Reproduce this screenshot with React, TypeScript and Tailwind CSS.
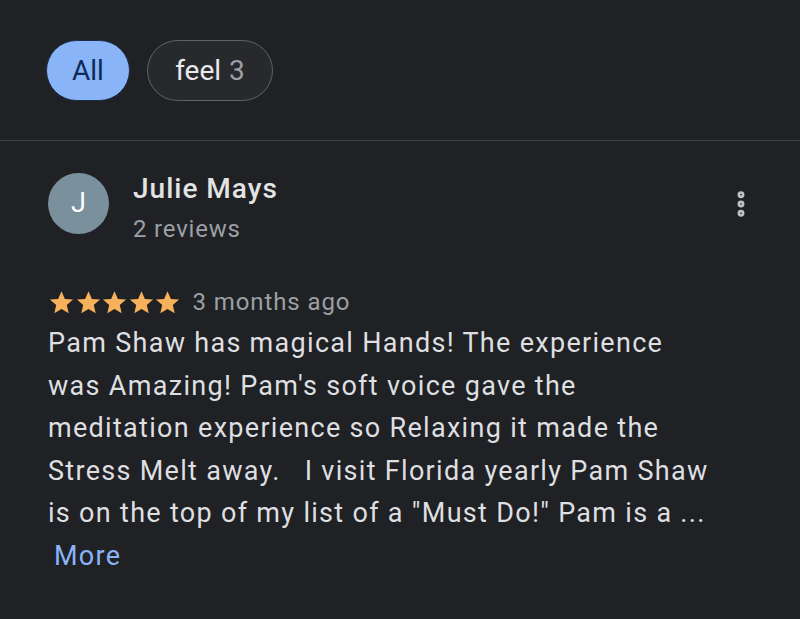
import { MoreVertical } from 'lucide-react';

function Star() {
  return (
    <svg className="w-[27px] h-[27px] -mr-[0.5px]" viewBox="0 0 24 24" fill="#f6b15a">
      <path d="M12 2l3 6.8 7.3.6-5.6 4.8 1.7 7.3L12 17.7l-6.4 3.8 1.7-7.3-5.6-4.8 7.3-.6z" />
    </svg>
  );
}

export default function App() {
  return (
    <div
      className="w-[800px] h-[619px] overflow-hidden bg-[#202124] text-[#e8eaed]"
      style={{ fontFamily: 'Roboto, "Noto Sans", sans-serif' }}
    >
      {/* Filter chips */}
      <div className="flex items-center gap-[17px] pl-[46px] pt-[40px] pb-[39px] border-b border-[#3c4043]">
        <button className="h-[61px] w-[84px] rounded-full bg-[#8ab4f8] text-[#0e2a59] text-[28px] border border-[#1a2a44]">
          All
        </button>
        <button className="h-[61px] w-[126px] justify-center rounded-full border-[1.5px] border-[#5f6368] bg-[#28292c] text-[28px] flex items-center gap-[8px]">
          <span className="text-[#e8eaed]">feel</span>
          <span className="text-[#9aa0a6]">3</span>
        </button>
      </div>

      {/* Review */}
      <div className="pl-[48px] pr-[40px] pt-[32px]">
        <div className="flex items-start">
          <div className="w-[61px] h-[61px] rounded-full bg-[#7b909d] flex items-center justify-center text-white text-[27px]">
            J
          </div>
          <div className="ml-[24px] flex-1 -mt-[2px]">
            <div className="text-[28px] leading-[36px] tracking-[1px] font-medium text-[#e3e3e3]">Julie Mays</div>
            <div className="mt-[6px] text-[24px] leading-[32px] tracking-[0.8px] text-[#9aa0a6]">2 reviews</div>
          </div>
          <MoreVertical className="w-[32px] h-[32px] mt-[15px] mr-[3px] text-[#bdc1c6]" strokeWidth={3.2} />
        </div>

        <div className="flex items-center mt-[39px]">
          <div className="flex">
            <Star />
            <Star />
            <Star />
            <Star />
            <Star />
          </div>
          <span className="ml-[12px] text-[24px] tracking-[0.9px] text-[#9aa0a6]">3 months ago</span>
        </div>

        <p className="mt-[2px] text-[27px] leading-[42.5px] tracking-[1.3px] text-[#dedfe0]">
          Pam Shaw has magical Hands! The experience
          <br />
          was Amazing! Pam's soft voice gave the
          <br />
          meditation experience so Relaxing it made the
          <br />
          Stress Melt away.&nbsp;&nbsp; I visit Florida yearly Pam Shaw
          <br />
          is on the top of my list of a "Must Do!" Pam is a ...
        </p>
        <div className="ml-[6px] text-[27px] leading-[42.5px] tracking-[1.3px] text-[#8ab4f8]">More</div>
      </div>
    </div>
  );
}
